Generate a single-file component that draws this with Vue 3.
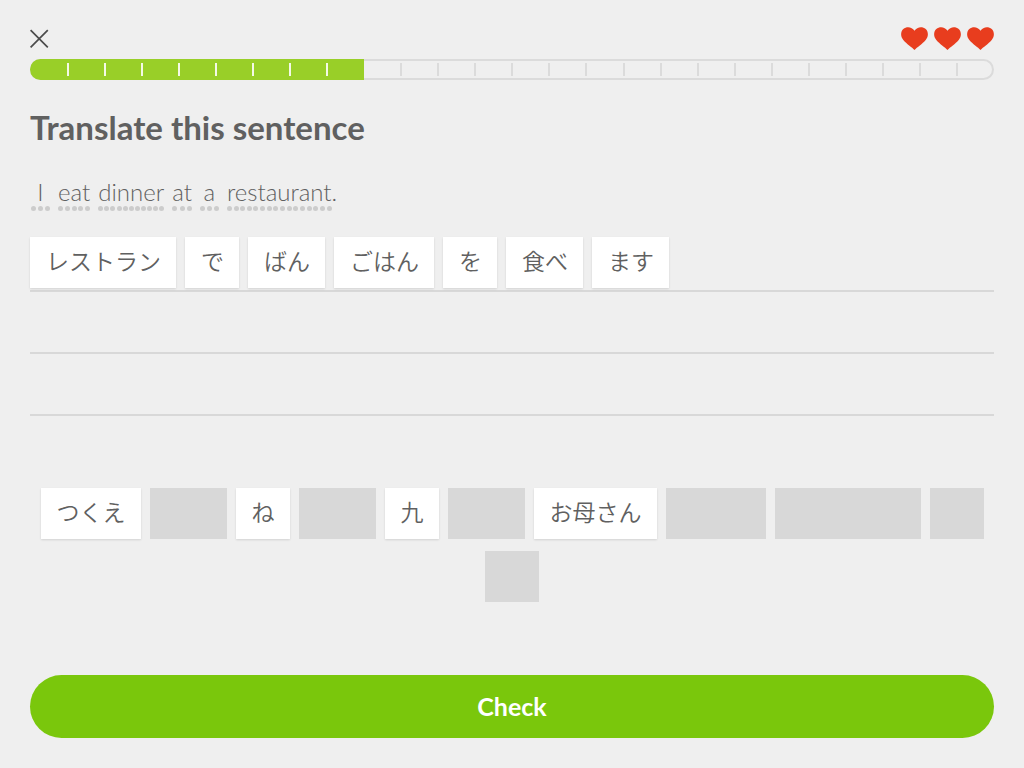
<script setup>
import { ref } from 'vue'

const segments = 26
const progress = ref(34.65)
const hearts = 3

const sentence = [
  { text: 'I', dots: 3 },
  { text: 'eat', dots: 5 },
  { text: 'dinner', dots: 11 },
  { text: 'at', dots: 3 },
  { text: 'a', dots: 3 },
  { text: 'restaurant', dots: 16, after: '.' }
]

const answer = ['レストラン', 'で', 'ばん', 'ごはん', 'を', '食べ', 'ます']

const bank = [
  { text: 'つくえ' },
  { text: 'ばん', used: true },
  { text: 'ね' },
  { text: 'ます', used: true },
  { text: '九' },
  { text: '食べ', used: true },
  { text: 'お母さん' },
  { text: 'ごはん', used: true },
  { text: 'レストラン', used: true },
  { text: 'で', used: true },
  { text: 'を', used: true }
]
</script>

<template>
  <main class="lesson">
    <header class="top">
      <button class="close" type="button" aria-label="Close">
        <svg viewBox="0 0 19 19" width="19" height="19" aria-hidden="true">
          <path d="M0.6 1.2 L17.8 18.4 M17.8 1.2 L0.6 18.4" fill="none" stroke="#4b4b4b" stroke-width="1.7" />
        </svg>
      </button>
      <div class="hearts" role="img" aria-label="3 hearts">
        <svg v-for="n in hearts" :key="n" viewBox="0 0 27 23" width="27" height="23">
          <path d="M13.5 23 C11 20.4 5.5 16.8 2.3 13 C-0.8 9.3 -0.4 4.6 2.3 2.1 C5.4 -0.8 10.8 -0.5 13.5 3.8 C16.2 -0.5 21.6 -0.8 24.7 2.1 C27.4 4.6 27.8 9.3 24.7 13 C21.5 16.8 16 20.4 13.5 23 Z" fill="#e83d1e" />
        </svg>
      </div>
    </header>

    <div class="progress" role="progressbar" aria-label="Lesson progress" aria-valuemin="0" aria-valuemax="26" aria-valuenow="9">
      <div class="fill" :style="{ width: progress + '%' }"></div>
      <div class="ticks">
        <span v-for="n in segments" :key="n" class="tick" :class="{ done: n < 9, end: n === 9 || n === segments }"></span>
      </div>
    </div>

    <h1>Translate this sentence</h1>

    <p class="sentence">
      <span v-for="word in sentence" :key="word.text" class="piece"><span class="word">{{ word.text }}<span class="dots" aria-hidden="true"><i v-for="n in word.dots" :key="n"></i></span></span>{{ word.after }}</span>
    </p>

    <section class="answer" aria-label="Your answer">
      <div class="line">
        <button v-for="t in answer" :key="t" type="button" class="tile" lang="ja">{{ t }}</button>
      </div>
      <div class="line"></div>
      <div class="line"></div>
    </section>

    <section class="bank" aria-label="Word bank">
      <button v-for="t in bank" :key="t.text" type="button" class="tile" :class="{ used: t.used }" :disabled="t.used" lang="ja">{{ t.used ? '' : t.text }}<span v-if="t.used" class="blank" :style="{ width: t.text.length + 'em' }"></span></button>
    </section>

    <button class="check" type="button">Check</button>
  </main>
</template>

<style>
body {
  margin: 0;
  background: #efefef;
}
</style>

<style scoped>
.lesson {
  box-sizing: border-box;
  min-height: 100vh;
  padding: 27px 30px 30px;
  display: flex;
  flex-direction: column;
  background: #efefef;
  color: #606060;
  font-family: Lato, "Noto Sans CJK JP", sans-serif;
}

button {
  margin: 0;
  border: 0;
  font: inherit;
  color: inherit;
  cursor: pointer;
}

.top {
  display: flex;
  justify-content: space-between;
  align-items: center;
  height: 23px;
}

.close {
  display: flex;
  padding: 0;
  background: none;
}

.hearts {
  display: flex;
  gap: 6px;
}

.progress {
  position: relative;
  box-sizing: border-box;
  height: 21px;
  margin-top: 9px;
  border-radius: 11px;
  overflow: hidden;
  box-shadow: inset 0 0 0 2px #dbdbdb;
}

.fill {
  position: absolute;
  inset: 0 auto 0 0;
  background: #99cf28;
}

.ticks {
  position: relative;
  display: flex;
  margin: 0 -1px 0 2px;
  padding-top: 4px;
}

.tick {
  box-sizing: border-box;
  flex: 1;
  height: 13px;
  border-right: 2px solid #dbdbdb;
}

.tick.done {
  border-color: #f4f9e6;
}

.tick.end {
  border-color: transparent;
}

h1 {
  margin: 27px 0 0;
  font-size: 33px;
  line-height: 40px;
  font-weight: 700;
}

.sentence {
  display: flex;
  align-items: flex-start;
  gap: 8px;
  margin: 29px 0 0 1px;
  font-size: 24px;
  line-height: 32px;
  font-weight: 300;
}

.piece {
  display: flex;
}

.word {
  min-width: 19px;
  text-align: center;
}

.dots {
  display: flex;
  justify-content: space-between;
  height: 5px;
  margin: -2px 0 -1px;
}

.dots i {
  width: 5px;
  height: 5px;
  border-radius: 50%;
  background: #cccccc;
}

.answer {
  margin-top: 20px;
}

.line {
  box-sizing: border-box;
  display: flex;
  gap: 9px;
  height: 62px;
  padding-top: 7px;
  border-bottom: 2px solid #d8d8d8;
}

.tile {
  box-sizing: border-box;
  height: 51px;
  padding: 0 15px 5px 16px;
  background: #ffffff;
  box-shadow: 0 1px 2px rgba(0, 0, 0, 0.12);
  font-family: "Noto Sans CJK JP", sans-serif;
  font-size: 23px;
  line-height: 46px;
  font-weight: 350;
  white-space: nowrap;
}

.tile.used {
  background: #d8d8d8;
  box-shadow: none;
  cursor: default;
}

.blank {
  display: inline-block;
}

.bank {
  display: flex;
  flex-wrap: wrap;
  justify-content: center;
  gap: 12px 9px;
  margin: 72px 8px 0;
}

.check {
  height: 63px;
  margin-top: auto;
  padding: 0 0 2px;
  border-radius: 32px;
  background: #7ac70c;
  color: #ffffff;
  font-size: 25px;
  font-weight: 700;
}
</style>
